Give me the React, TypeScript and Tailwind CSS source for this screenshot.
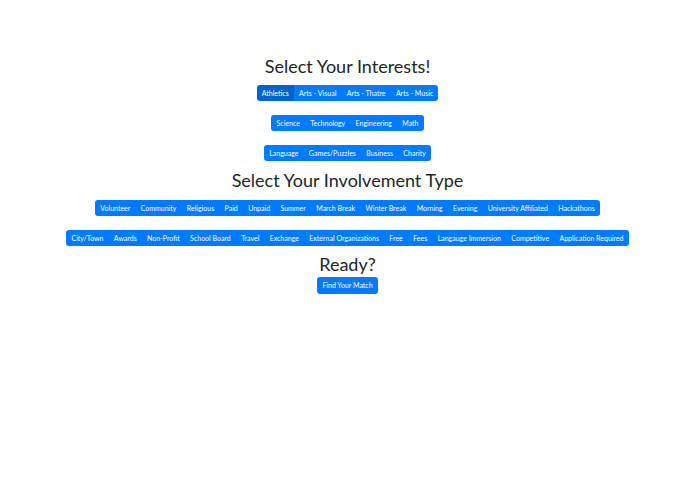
const interests = [
  ["Athletics", "Arts - Visual", "Arts - Thatre", "Arts - Music"],
  ["Science", "Technology", "Engineering", "Math"],
  ["Language", "Games/Puzzles", "Business", "Charity"],
];

const involvement = [
  [
    "Volunteer",
    "Community",
    "Religious",
    "Paid",
    "Unpaid",
    "Summer",
    "March Break",
    "Winter Break",
    "Morning",
    "Evening",
    "University Affiliated",
    "Hackathons",
  ],
  [
    "City/Town",
    "Awards",
    "Non-Profit",
    "School Board",
    "Travel",
    "Exchange",
    "External Organizations",
    "Free",
    "Fees",
    "Langauge Immersion",
    "Competitive",
    "Application Required",
  ],
];

const ButtonGroup = ({ items, active }: { items: string[]; active?: string }) => (
  <div className="flex rounded-[3px] overflow-hidden">
    {items.map((item) => (
      <button
        key={item}
        className={
          "h-4 px-[5.2px] text-[7px] leading-none text-white " +
          (item === active ? "bg-[#0062cc]" : "bg-[#007bff]")
        }
      >
        {item}
      </button>
    ))}
  </div>
);

const App = () => {
  return (
    <div
      className="w-[695px] h-[494px] bg-white flex flex-col items-center text-[#212529]"
      style={{ fontFamily: 'Lato, "Noto Sans", sans-serif' }}
    >
      <h1 className="mt-[54px] text-[18px] leading-6">Select Your Interests!</h1>
      <div className="mt-[7px] flex flex-col items-center gap-[14px]">
        {interests.map((row, i) => (
          <ButtonGroup key={i} items={row} active="Athletics" />
        ))}
      </div>
      <h2 className="mt-[7px] text-[18px] leading-6">Select Your Involvement Type</h2>
      <div className="mt-[8px] flex flex-col items-center gap-[14px]">
        {involvement.map((row, i) => (
          <ButtonGroup key={i} items={row} />
        ))}
      </div>
      <h2 className="mt-[6px] text-[18px] leading-6">Ready?</h2>
      <button className="mt-[1px] h-[17px] px-[5px] rounded-[3px] bg-[#007bff] text-[7px] leading-none text-white">
        Find Your Match
      </button>
    </div>
  );
};

export default App;
